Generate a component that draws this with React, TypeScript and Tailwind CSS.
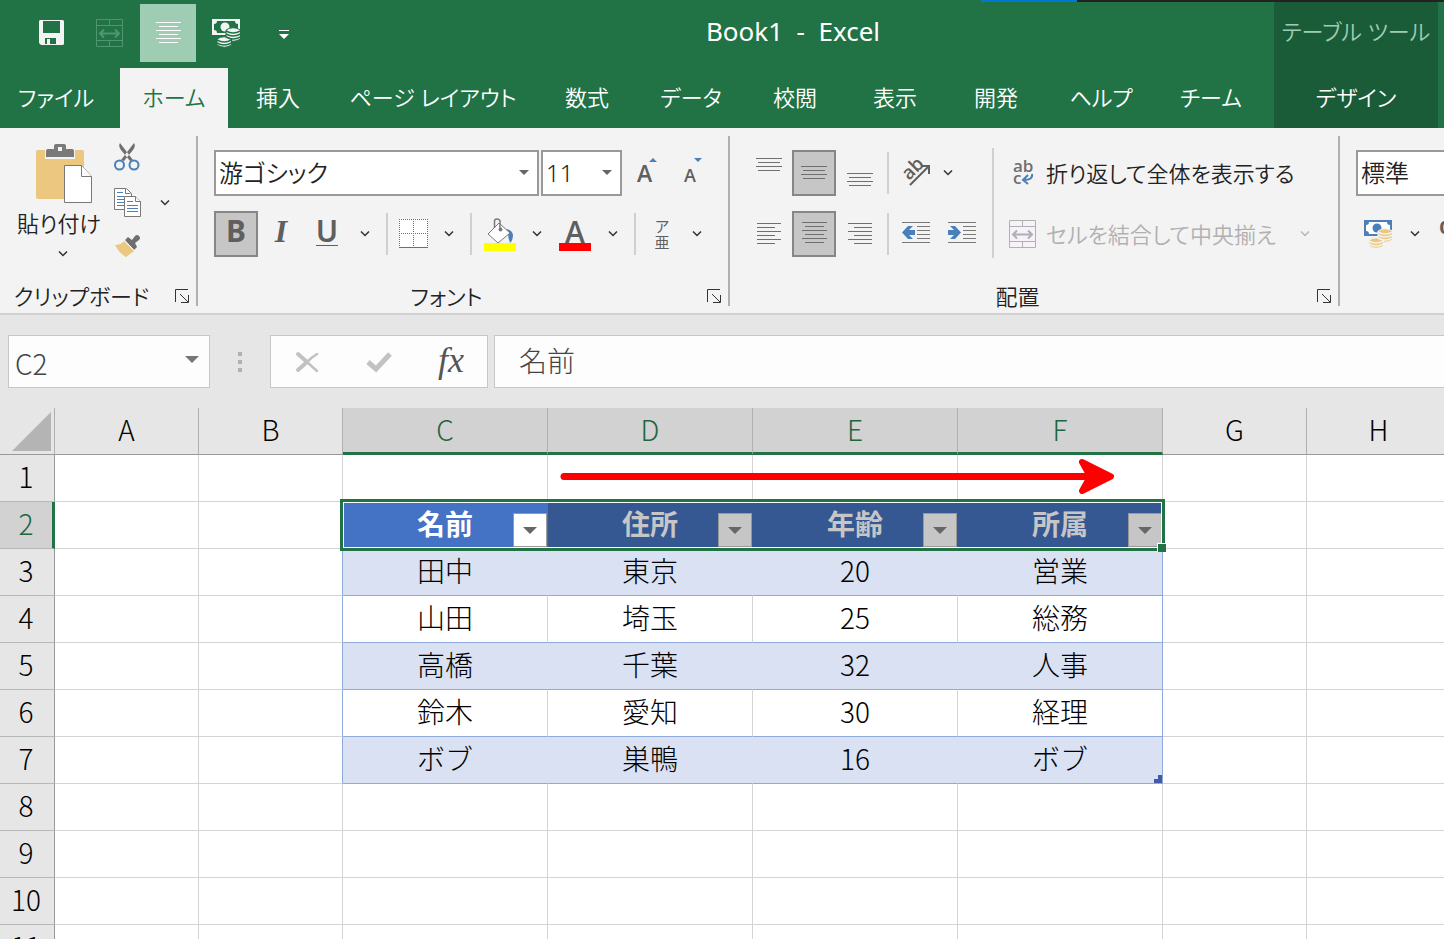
import { useState } from 'react';
import type { ReactNode } from 'react';

// Ribbon tabs with the width each one takes
const tabs = [
  { label: 'ファイル', width: 'w-[112px] mr-2' },
  { label: 'ホーム', width: 'w-[108px]' },
  { label: '挿入', width: 'w-[100px]' },
  { label: 'ページ レイアウト', width: 'w-[210px]' },
  { label: '数式', width: 'w-[98px]' },
  { label: 'データ', width: 'w-[110px]' },
  { label: '校閲', width: 'w-[98px]' },
  { label: '表示', width: 'w-[102px]' },
  { label: '開発', width: 'w-[100px]' },
  { label: 'ヘルプ', width: 'w-[110px]' },
  { label: 'チーム', width: 'w-[110px]' },
];

const columns = ['A', 'B', 'C', 'D', 'E', 'F', 'G', 'H'];
const rows = [1, 2, 3, 4, 5, 6, 7, 8, 9, 10, 11];
const tableColumns = ['C', 'D', 'E', 'F'];

const data: Record<number, string[]> = {
  2: ['名前', '住所', '年齢', '所属'],
  3: ['田中', '東京', '20', '営業'],
  4: ['山田', '埼玉', '25', '総務'],
  5: ['高橋', '千葉', '32', '人事'],
  6: ['鈴木', '愛知', '30', '経理'],
  7: ['ボブ', '巣鴨', '16', 'ボブ'],
};

/* ---------- icons ---------- */

function SaveIcon() {
  return (
    <svg width="26" height="26" viewBox="0 0 26 26">
      <path fill="#f3f3f3" fillRule="evenodd" d="M1 0h23l1 1v23l-1 1H2l-2-2V1zM4 1v12h17V1zM6 18v6h2v-5h3v5h6v-6z" />
    </svg>
  );
}

function MergeIcon({ fill = 'none' }: { fill?: string }) {
  return (
    <svg width="28" height="28" viewBox="0 0 28 28" fill="none" stroke="currentColor">
      <path fill={fill} d="M.5.5h26v27H.5z" />
      <path d="M.5 6.5h26M.5 21.5h26M13.5.5v6M13.5 21.5v6" />
      <path strokeWidth="2" d="M4 14.5h19M8 10.5l-4 4 4 4M19 10.5l4 4-4 4" />
    </svg>
  );
}

// A stack of text lines; each pair is [start, end]
function LinesIcon({ lines, width = 26 }: { lines: [number, number][]; width?: number }) {
  return (
    <svg width={width} height={lines.length * 4 - 2} viewBox={`0 0 ${width} ${lines.length * 4 - 2}`} stroke="currentColor">
      {lines.map(([from, to], i) => (
        <path key={i} d={`M${from} ${i * 4 + 0.5}H${to}`} />
      ))}
    </svg>
  );
}

const valignLines: [number, number][] = [[0, 26], [2, 24], [0, 26], [2, 24]];
const leftLines: [number, number][] = [[0, 24], [0, 18], [0, 24], [0, 18], [0, 24], [0, 18]];
const centerLines: [number, number][] = [[0, 25], [3, 22], [0, 25], [3, 22], [0, 25], [3, 22]];
const rightLines: [number, number][] = [[0, 24], [6, 24], [0, 24], [6, 24], [0, 24], [6, 24]];

function MoneyIcon({ note, paper, coin, gap }: { note: string; paper: string; coin: string; gap: string }) {
  return (
    <svg width="29" height="29" viewBox="0 0 29 29">
      <path fill={note} d="M0 0h28v16H0z" />
      <path fill={paper} d="M5 2h18q0 3 3 3v6q-3 0-3 3H5q0-3-3-3V5q3 0 3-3z" />
      <circle cx="13" cy="8" r="4.500" fill={note} />
      <g fill={coin} stroke={gap}>
        <path d="M14 11q7-4.500 14.500 0v9q-7 4.500-14.500 0z" />
        <path d="M5 20q7-4.500 14.500 0v6q-7 4.500-14.500 0z" />
      </g>
      <g fill="none" stroke={gap} strokeWidth="1.500">
        <path d="M14 12q7 4 14.500 0M14 15q7 4 14.500 0M14 18q7 4 14.500 0M5 21q7 4 14.500 0M5 24q7 4 14.500 0" />
      </g>
    </svg>
  );
}

function PasteIcon() {
  return (
    <svg width="58" height="62" viewBox="0 0 58 62">
      <rect y="7" width="48" height="49" rx="2" fill="#ecc77f" />
      <path fill="#f3f3f3" d="M9 16V5h8V0h14v5h8v11z" />
      <path fill="#797979" fillRule="evenodd" d="M10 14V8q0-2 2-2h6V3q0-2 2-2h8q2 0 2 2v3h6q2 0 2 2v6zM22 4v4h4V4z" />
      <path fill="#fff" stroke="#797979" d="M28.500 22.500h17l10 11v26h-27z" />
      <path fill="#fff" stroke="#797979" d="M45.500 22.500v11h10" />
    </svg>
  );
}

function CutIcon() {
  return (
    <svg width="26" height="28" viewBox="0 0 26 28" fill="none">
      <path fill="#6f6f6f" d="M6 0q-2 3 1 7l9 11 3-1zM20 0q2 3-1 7l-9 11-3-1z" />
      <circle cx="5.500" cy="22" r="4.500" stroke="#4a7fb9" strokeWidth="2" />
      <circle cx="20" cy="22" r="4.500" stroke="#4a7fb9" strokeWidth="2" />
    </svg>
  );
}

function CopyIcon() {
  return (
    <svg width="28" height="30" viewBox="0 0 28 30" fill="#fff" stroke="#797979">
      <path d="M.5.5h12l5 5v16H.5z" />
      <path d="M11.500.5v5h5" />
      <path stroke="#4a7fb9" d="M3 4.500h6M3 8.500h7M3 11.500h7M3 14.500h7M3 17.500h7" />
      <path d="M10.500 8.500h11l5 5v15h-16z" />
      <path d="M21.500 8.500v5h5" />
      <path stroke="#4a7fb9" d="M13 13.500h6M13 17.500h11M13 20.500h11M13 23.500h11" />
    </svg>
  );
}

function BrushIcon() {
  return (
    <svg width="26" height="24" viewBox="0 0 26 24">
      <path fill="#ecc77f" d="M1 10q6 0 9-4l10 10-8 6q-6-3-11-12z" />
      <path fill="#6f6f6f" d="M11 5l3-3 4 3 3-4q2-2 4 0t0 4l-4 3 2 4-3 3z" />
      <path stroke="#f3f3f3" d="M10 5l11 11" />
    </svg>
  );
}

function BordersIcon() {
  return (
    <svg width="30" height="30" viewBox="0 0 30 30">
      <path fill="#fff" d="M0 0h29v29H0z" />
      <path stroke="#6f6f6f" strokeDasharray="1 1" d="M0 .5h29M0 14.500h29M.5 0v28M14.500 0v28M28.500 0v28" />
      <path stroke="#6f6f6f" d="M0 28.500h29" />
    </svg>
  );
}

function FillIcon() {
  return (
    <svg width="32" height="33" viewBox="0 0 32 33" fill="none">
      <path fill="#4a7fb9" d="M20 11q8 0 9 6 0 5-3 8-2-5-2-10z" />
      <path fill="#fff" stroke="#797979" d="M4 16L15 5l11 10-12 10z" />
      <path stroke="#797979" strokeWidth="1.500" d="M10.500 10V3q0-2 2.500-2t3 2v8" />
      <circle cx="16.500" cy="11.500" r="2" fill="#797979" />
      <path fill="#ff0" d="M0 25h32v8H0z" />
    </svg>
  );
}

function OrientationIcon() {
  return (
    <svg width="30" height="30" viewBox="0 0 30 30" fill="none" className="overflow-visible">
      <text x="0" y="0" transform="translate(8 23) rotate(-45)" fill="#5f5f5f" fontFamily="Open Sans, sans-serif" fontWeight="600" fontSize="19">
        ab
      </text>
      <path stroke="#5f5f5f" strokeWidth="2" d="M9 27L28 8M20 8h8v8" />
    </svg>
  );
}

function IndentIcon({ right = false }: { right?: boolean }) {
  return (
    <svg width="29" height="22" viewBox="0 0 29 22">
      <path stroke="#797979" d="M0 .5h28M15 4.500h13M15 8.500h13M15 12.500h13M15 16.500h13M0 20.500h28" />
      {right ? (
        <path fill="#4a7fb9" d="M0 8h6L2 4h5l6 6.500L7 17H2l4-4H0z" />
      ) : (
        <path fill="#4a7fb9" d="M13 8H7l4-4H6l-6 6.500L6 17h5l-4-4h6z" />
      )}
    </svg>
  );
}

function WrapIcon() {
  return (
    <svg width="24" height="30" viewBox="0 0 24 30" fill="none" className="overflow-visible">
      <g fill="#6f6f6f" fontFamily="Open Sans, sans-serif" fontWeight="600" fontSize="17">
        <text x="2" y="14">ab</text>
        <text x="2" y="26">c</text>
      </g>
      <path stroke="#4a7fb9" strokeWidth="2" d="M21 16q1 6-8 6M17 17l-5 5 5 4" />
    </svg>
  );
}

function Chevron({ className = 'text-[#333]' }: { className?: string }) {
  return (
    <svg width="10" height="6" viewBox="0 0 10 6" fill="none" stroke="currentColor" strokeWidth="1.500" className={className}>
      <path d="M1 .5l4 4 4-4" />
    </svg>
  );
}

function Triangle({ className }: { className: string }) {
  return (
    <svg viewBox="0 0 14 7" className={className} fill="currentColor" preserveAspectRatio="none">
      <path d="M0 0h14L7 7z" />
    </svg>
  );
}

/* ---------- ribbon parts ---------- */

interface ToolButtonProps {
  label: string;
  width: string;
  active?: boolean;
  children: ReactNode;
}

function ToolButton({ label, width, active, children }: ToolButtonProps) {
  return (
    <button
      type="button"
      aria-label={label}
      className={`flex h-[46px] shrink-0 items-center justify-center text-[#6f6f6f] ${width} ${
        active ? 'border-2 border-[#868686] bg-[#c6c6c6]' : ''
      }`}
    >
      {children}
    </button>
  );
}

function MoreButton({ label, width = 'w-[30px]' }: { label: string; width?: string }) {
  return (
    <ToolButton label={label} width={width}>
      <Chevron />
    </ToolButton>
  );
}

function Separator({ className = 'mx-1.5' }: { className?: string }) {
  return <div className={`h-[42px] w-0.5 shrink-0 self-center bg-[#d0d0d0] ${className}`} />;
}

function RibbonSelect({ label, value, width }: { label: string; value: string; width: string }) {
  return (
    <div className={`relative h-[46px] shrink-0 ${width}`}>
      <select aria-label={label} className="h-full w-full appearance-none border-2 border-[#999] bg-white pl-[3px] text-2xl text-[#222]">
        <option>{value}</option>
      </select>
      <Triangle className="pointer-events-none absolute top-5 right-2.5 h-[5px] w-2.5 text-[#666]" />
    </div>
  );
}

function RibbonGroup({ title, width, children }: { title: string; width: string; children: ReactNode }) {
  return (
    <section aria-label={title} className={`flex h-[170px] shrink-0 flex-col border-r-2 border-[#b0b0b0] ${width}`}>
      <div className="h-[150px]">{children}</div>
      <div className="flex h-5 items-center">
        <span className="flex-1 pr-3 text-center text-[22px] leading-5 text-[#222]">{title}</span>
        <button type="button" aria-label={`${title}の設定`} className="mr-[7px]">
          <svg width="14" height="14" viewBox="0 0 14 14" fill="none" stroke="#333">
            <path d="M.5 13V.5H13M5 5l8 8M13.500 6v7.500H6" />
          </svg>
        </button>
      </div>
    </section>
  );
}

function Ribbon() {
  return (
    <div className="flex overflow-hidden border-b-2 border-[#d0d0d0] bg-[#f3f3f3] pt-2 pb-[7px] font-[350]">
      <RibbonGroup title="クリップボード" width="w-[198px]">
        <div className="flex pt-[7px]">
          <button type="button" className="flex w-[108px] flex-col items-center pl-2.5 text-[22px] leading-9 whitespace-nowrap text-[#222]">
            <span className="pl-3">
              <PasteIcon />
            </span>
            貼り付け
            <Chevron className="mt-2.5 ml-2 text-[#333]" />
          </button>
          <div className="flex flex-col gap-[17px] pl-1.5">
            <button type="button" aria-label="切り取り">
              <CutIcon />
            </button>
            <button type="button" aria-label="コピー">
              <CopyIcon />
            </button>
            <button type="button" aria-label="書式のコピー">
              <BrushIcon />
            </button>
          </div>
          <button type="button" aria-label="コピーのオプション" className="ml-[18px] h-[120px]">
            <Chevron />
          </button>
        </div>
      </RibbonGroup>

      <RibbonGroup title="フォント" width="w-[532px]">
        <div className="flex flex-col gap-[15px] pt-3.5 pl-4">
          <div className="flex">
            <RibbonSelect label="フォント名" value="游ゴシック" width="w-[325px]" />
            <div className="w-0.5" />
            <RibbonSelect label="フォント サイズ" value="11" width="w-[81px]" />
            <ToolButton label="フォント サイズの拡大" width="w-[48px]">
              <svg width="20" height="28" viewBox="0 0 20 28" className="overflow-visible">
                <text x="1" y="23" fontFamily="Open Sans, sans-serif" fontWeight="600" fontSize="23" fill="#5f5f5f">A</text>
                <path fill="#4a7fb9" d="M13 3l4-4 4 4z" />
              </svg>
            </ToolButton>
            <ToolButton label="フォント サイズの縮小" width="w-[46px]">
              <svg width="20" height="28" viewBox="0 0 20 28" className="overflow-visible">
                <text x="1" y="23" fontFamily="Open Sans, sans-serif" fontWeight="600" fontSize="18" fill="#5f5f5f">A</text>
                <path fill="#4a7fb9" d="M11-1l4 4 4-4z" />
              </svg>
            </ToolButton>
          </div>
          <div className="flex">
            <ToolButton label="太字" width="w-[44px]" active>
              <span className="pb-1.5 text-3xl leading-8 font-bold text-[#5f5f5f]">B</span>
            </ToolButton>
            <ToolButton label="斜体" width="w-[46px]">
              <span className="pb-1.5 font-['Liberation_Serif',serif] text-[32px] leading-8 font-bold text-[#5f5f5f] italic">I</span>
            </ToolButton>
            <ToolButton label="下線" width="w-[46px]">
              <span className="mb-1.5 border-b border-[#5f5f5f] text-3xl leading-7 font-semibold text-[#5f5f5f]">U</span>
            </ToolButton>
            <MoreButton label="下線の種類" />
            <Separator />
            <ToolButton label="罫線" width="w-[40px]">
              <BordersIcon />
            </ToolButton>
            <MoreButton label="罫線の種類" />
            <Separator />
            <ToolButton label="塗りつぶしの色" width="w-[44px]">
              <FillIcon />
            </ToolButton>
            <MoreButton label="塗りつぶしの色の一覧" />
            <ToolButton label="フォントの色" width="w-[46px]">
              <svg width="32" height="33" viewBox="0 0 32 33" className="overflow-visible">
                <text x="16" y="25" textAnchor="middle" fontFamily="Open Sans, sans-serif" fontWeight="600" fontSize="30" fill="#5f5f5f">A</text>
                <path fill="#f00" d="M0 25h32v8H0z" />
              </svg>
            </ToolButton>
            <MoreButton label="フォントの色の一覧" />
            <Separator />
            <ToolButton label="ふりがなの表示" width="w-[40px]">
              <span className="flex flex-col text-[15px] leading-4 font-normal text-[#5f5f5f]">
                <span>ア</span>
                <span>亜</span>
              </span>
            </ToolButton>
            <MoreButton label="ふりがなの設定" />
          </div>
        </div>
      </RibbonGroup>

      <RibbonGroup title="配置" width="w-[610px]">
        <div className="flex">
          <div className="flex w-[262px] shrink-0 flex-col gap-[15px] pt-3.5 pl-4">
            <div className="flex">
              <ToolButton label="上揃え" width="w-[46px] pb-4">
                <LinesIcon lines={valignLines} />
              </ToolButton>
              <ToolButton label="上下中央揃え" width="w-[44px]" active>
                <LinesIcon lines={valignLines} />
              </ToolButton>
              <ToolButton label="下揃え" width="w-[48px] pt-3.5">
                <LinesIcon lines={valignLines} />
              </ToolButton>
              <Separator className="mx-[3px]" />
              <ToolButton label="方向" width="w-[48px]">
                <OrientationIcon />
              </ToolButton>
              <MoreButton label="方向の設定" width="w-4" />
            </div>
            <div className="flex">
              <ToolButton label="左揃え" width="w-[46px]">
                <LinesIcon lines={leftLines} width={24} />
              </ToolButton>
              <ToolButton label="中央揃え" width="w-[44px] pb-0.5" active>
                <LinesIcon lines={centerLines} width={25} />
              </ToolButton>
              <ToolButton label="右揃え" width="w-[48px]">
                <LinesIcon lines={rightLines} width={24} />
              </ToolButton>
              <Separator className="mx-[3px]" />
              <ToolButton label="インデントを減らす" width="w-[48px] pb-0.5">
                <IndentIcon />
              </ToolButton>
              <ToolButton label="インデントを増やす" width="w-[44px] pb-0.5">
                <IndentIcon right />
              </ToolButton>
            </div>
          </div>
          <div className="mt-3 h-[110px] w-0.5 shrink-0 bg-[#d0d0d0]" />
          <div className="flex flex-col gap-[15px] pt-3.5 pl-3.5">
            <button type="button" className="flex h-[46px] items-center gap-2 text-[22px] whitespace-nowrap text-[#222]">
              <span className="flex w-[30px] justify-center">
                <WrapIcon />
              </span>
              折り返して全体を表示する
            </button>
            <button type="button" disabled className="flex h-[46px] items-center gap-2 text-[22px] whitespace-nowrap text-[#b0b0b0]">
              <span className="flex w-[30px] justify-center">
                <MergeIcon fill="#f7f1fa" />
              </span>
              セルを結合して中央揃え
              <Chevron className="ml-4 text-[#b8b8b8]" />
            </button>
          </div>
        </div>
      </RibbonGroup>

      <section aria-label="数値" className="flex flex-1 flex-col gap-[15px] pt-3.5 pl-4">
        <RibbonSelect label="表示形式" value="標準" width="w-[240px]" />
        <div className="flex">
          <ToolButton label="通貨表示形式" width="w-[44px]">
            <MoneyIcon note="#4a7fb9" paper="#fff" coin="#ecc77f" gap="#f3f3f3" />
          </ToolButton>
          <MoreButton label="通貨の種類" />
          <ToolButton label="パーセント スタイル" width="w-[44px]">
            <span className="pb-1 text-3xl font-semibold text-[#5f5f5f]">%</span>
          </ToolButton>
        </div>
      </section>
    </div>
  );
}

function Header({ activeTab, onSelect }: { activeTab: string; onSelect: (tab: string) => void }) {
  return (
    <header className="overflow-hidden bg-[#217346] text-white">
      <div className="flex h-0.5 justify-end">
        <div className="w-24 bg-[#0078d4]" />
        <div className="w-[367px] bg-[#222]" />
      </div>
      <div className="flex pr-1.5">
        <div className="min-w-0 flex-1">
          <div className="flex h-[66px]">
            <div className="flex h-[60px] gap-0.5 pt-0.5 pl-6">
              <button type="button" aria-label="上書き保存" className="flex w-14 items-center justify-center">
                <SaveIcon />
              </button>
              <button type="button" aria-label="セルを結合して中央揃え" className="flex w-14 items-center justify-center text-[#4f9670]">
                <MergeIcon />
              </button>
              <button type="button" aria-label="中央揃え" className="flex w-14 items-center justify-center bg-[#9fcdb3] text-white">
                <LinesIcon lines={centerLines} width={25} />
              </button>
              <button type="button" aria-label="通貨表示形式" className="flex w-14 items-center justify-center">
                <MoneyIcon note="#f3f3f3" paper="#217346" coin="#f3f3f3" gap="#217346" />
              </button>
              <button type="button" aria-label="クイック アクセス ツール バーのユーザー設定" className="flex w-14 items-center justify-center pt-1">
                <svg width="10" height="10" viewBox="0 0 10 10" fill="#fff">
                  <path d="M0 0h10v1H0zM0 4h10L5 9z" />
                </svg>
              </button>
            </div>
            <h1 className="flex-1 text-center text-[26px] leading-[58px] whitespace-pre">Book1  -  Excel</h1>
          </div>
          <nav className="flex h-[60px]">
            {tabs.map((tab) => (
              <button
                key={tab.label}
                type="button"
                onClick={() => onSelect(tab.label)}
                className={`shrink-0 pb-0.5 text-[22px] font-[350] whitespace-nowrap ${tab.width} ${
                  activeTab === tab.label ? 'bg-[#f3f3f3] text-[#217346]' : ''
                }`}
              >
                {tab.label}
              </button>
            ))}
          </nav>
        </div>
        <div className="flex w-[164px] shrink-0 flex-col bg-[#1b5c38] text-[22px] font-[350] whitespace-nowrap">
          <span className="flex h-[66px] justify-center leading-[58px] text-[#9fcdb3]">テーブル ツール</span>
          <button type="button" className="h-[60px] pb-0.5">
            デザイン
          </button>
        </div>
      </div>
    </header>
  );
}

function FormulaBar() {
  return (
    <div className="flex h-[93px] bg-[#e6e6e6] pt-5 pl-2 font-light text-[#444]">
      <div className="relative h-[53px] w-[202px] shrink-0">
        <input
          aria-label="名前ボックス"
          defaultValue="C2"
          className="h-full w-full border border-[#c6c6c6] bg-[#fdfdfd] pt-0.5 pl-1.5 font-['Noto_Sans_CJK_JP',sans-serif] text-[28px]"
        />
        <Triangle className="pointer-events-none absolute top-[21px] right-[11px] h-[7px] w-3.5 text-[#777]" />
      </div>
      <div className="flex h-[53px] w-[60px] shrink-0 flex-col items-center justify-center gap-1">
        <div className="size-1 bg-[#b0b0b0]" />
        <div className="size-1 bg-[#b0b0b0]" />
        <div className="size-1 bg-[#b0b0b0]" />
      </div>
      <div className="mr-1.5 flex h-[53px] w-[218px] shrink-0 border border-[#c6c6c6] bg-[#fdfdfd]">
        <button type="button" aria-label="キャンセル" className="flex flex-1 items-center justify-center">
          <svg width="24" height="22" viewBox="0 0 24 22" fill="none" stroke="#c2c2c2" strokeLinecap="round">
            <path strokeWidth="4" d="M3 3l9 8M3 19l9-8" />
            <path strokeWidth="2.500" d="M12 11l10 9M12 11q5-5 10-8" />
          </svg>
        </button>
        <button type="button" aria-label="入力" className="flex flex-1 items-center justify-center">
          <svg width="26" height="22" viewBox="0 0 26 22" fill="none" stroke="#c2c2c2" strokeWidth="5">
            <path d="M2 11l8 7L24 3" />
          </svg>
        </button>
        <button
          type="button"
          aria-label="関数の挿入"
          className="flex-1 pb-1 font-['Liberation_Serif',serif] text-[36px] leading-8 font-normal text-[#555] italic"
        >
          fx
        </button>
      </div>
      <input
        aria-label="数式バー"
        defaultValue="名前"
        className="h-[53px] min-w-0 flex-1 border border-r-0 border-[#c6c6c6] bg-[#fdfdfd] pb-1 pl-6 font-['Noto_Sans_CJK_JP',sans-serif] text-[28px]"
      />
    </div>
  );
}

function cellStyle(row: number, col: string) {
  const inTable = tableColumns.includes(col) && row >= 2 && row <= 7;
  if (!inTable) {
    // column B carries the left border of the table
    if (col === 'B' && row >= 3 && row <= 7) return 'border-r-[#8ea9db] border-b-[#d4d4d4]';
    return 'border-[#d4d4d4]';
  }
  if (row === 2) {
    return col === 'C'
      ? 'bg-[#4472c4] border-[#4472c4] font-bold text-white'
      : 'bg-[#355893] border-[#355893] font-bold text-[#c6c6c6]';
  }
  const right = col === 'F' ? 'border-r-[#8ea9db]' : row % 2 ? 'border-r-[#d9e1f2]' : 'border-r-[#d4d4d4]';
  return `border-b-[#8ea9db] ${right} ${row % 2 ? 'bg-[#d9e1f2]' : 'bg-white'}`;
}

function Sheet() {
  return (
    <main className="relative flex-1 overflow-hidden bg-white font-['Noto_Sans_CJK_JP',sans-serif] font-light [font-feature-settings:normal]">
      <table className="w-[1451px] table-fixed border-separate border-spacing-0 text-center text-[28px] leading-[42px] text-black">
        <colgroup>
          <col className="w-[55px]" />
          {columns.map((col) => (
            <col key={col} className={tableColumns.includes(col) ? 'w-[205px]' : 'w-[144px]'} />
          ))}
        </colgroup>
        <thead>
          <tr className="h-[47px]">
            <th className="border-r border-b border-r-[#b0b0b0] border-b-[#999] bg-[#e6e6e6] p-0">
              <svg width="39" height="39" viewBox="0 0 39 39" className="ml-auto mr-[3px]">
                <path fill="#b4b4b4" d="M39 0v39H0z" />
              </svg>
            </th>
            {columns.map((col) => (
              <th
                key={col}
                scope="col"
                className={`border-r border-r-[#b0b0b0] p-0 font-light ${
                  tableColumns.includes(col)
                    ? 'border-b-3 border-b-[#217346] bg-[#d2d2d2] pb-0.5 text-[#1f6540]'
                    : 'border-b border-b-[#999] bg-[#e6e6e6] pb-1'
                }`}
              >
                {col}
              </th>
            ))}
          </tr>
        </thead>
        <tbody>
          {rows.map((row) => (
            <tr key={row} className="h-[47px]">
              <th
                scope="row"
                className={`border-b border-b-[#b8b8b8] p-0 pb-1 font-light ${
                  row === 2 ? 'border-r-3 border-r-[#217346] bg-[#d2d2d2] text-[#1f6540]' : 'border-r border-r-[#999] bg-[#e6e6e6] pr-0.5'
                }`}
              >
                {row}
              </th>
              {columns.map((col) => {
                const text = data[row]?.[tableColumns.indexOf(col)];
                return (
                  <td key={col} className={`relative border-r border-b p-0 pb-1 ${cellStyle(row, col)}`}>
                    {text}
                    {row === 2 && text && (
                      <button
                        type="button"
                        aria-label={`${text}のフィルター`}
                        className={`absolute right-0 bottom-px flex size-[34px] items-center justify-center border border-[#999] ${
                          col === 'C' ? 'bg-white' : 'bg-[#c6c6c6]'
                        }`}
                      >
                        <Triangle className="h-[7px] w-3.5 text-[#666]" />
                      </button>
                    )}
                    {row === 7 && col === 'F' && (
                      <svg width="8" height="8" viewBox="0 0 8 8" className="absolute right-0 bottom-0">
                        <path fill="#4459a9" d="M4 0h4v8H0V4h4z" />
                      </svg>
                    )}
                  </td>
                );
              })}
            </tr>
          ))}
        </tbody>
      </table>

      {/* selection frame over C2:F2 with its fill handle */}
      <div className="pointer-events-none absolute top-[91px] left-[340px] h-[52px] w-[825px] border-3 border-[#217346]">
        <div className="h-full border border-white" />
        <div className="absolute -right-1 -bottom-1 size-[9px] border-t border-l border-white bg-[#217346]" />
      </div>

      <svg width="556" height="36" viewBox="0 0 556 36" className="pointer-events-none absolute top-[50px] left-[559px]">
        <path stroke="#f00" strokeWidth="7" strokeLinecap="round" d="M5 18.500h530" />
        <path fill="#f00" stroke="#f00" strokeWidth="6" strokeLinejoin="round" d="M523 4l29 14.500L523 33l8-14.500z" />
      </svg>
    </main>
  );
}

export default function App() {
  const [activeTab, setActiveTab] = useState('ホーム');

  return (
    <div
      lang="ja"
      className="flex h-screen flex-col overflow-hidden font-['Noto_Sans','Noto_Sans_CJK_JP',sans-serif] [font-feature-settings:'palt']"
    >
      <Header activeTab={activeTab} onSelect={setActiveTab} />
      <Ribbon />
      <FormulaBar />
      <Sheet />
    </div>
  );
}
